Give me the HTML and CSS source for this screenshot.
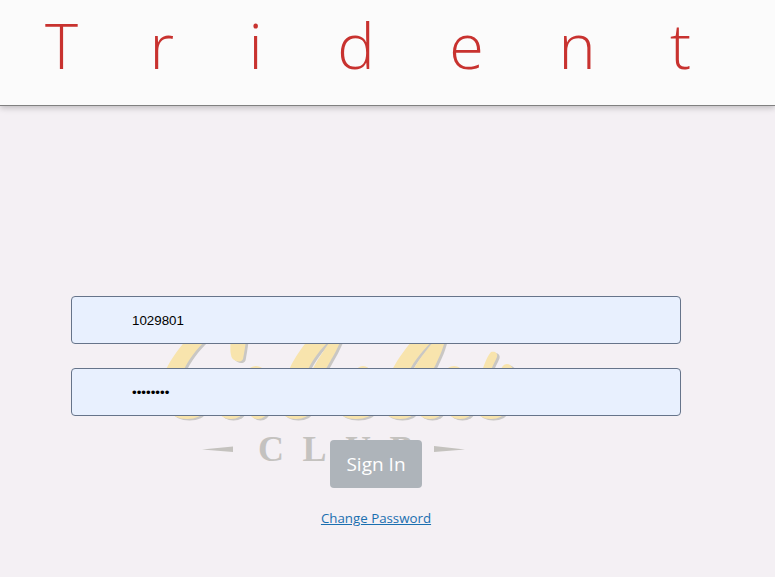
FILE: index.html
```html
<!DOCTYPE html>
<html lang="en">
<head>
<meta charset="utf-8">
<title>Trident</title>
<link rel="stylesheet" href="styles.css">
</head>
<body>
<header class="topbar">
  <h1 class="brand"><span class="brand-initial">T</span>rident</h1>
</header>
<main class="page">
  <svg class="logo" viewBox="160 335 360 135" width="360" height="135" aria-hidden="true">
    <defs>
      <g id="script">
        <path d="M186 340 L206 340 C196 350 188 360 183 372 L165 372 C170 360 178 350 186 340 Z"/>
        <path d="M231 340 L246 340 C245 348 244 354 243 359 C241 363 235 362 232 358 C230 354 230 346 231 340 Z"/>
        <ellipse cx="256" cy="372" rx="8" ry="6"/>
        <path d="M308 340 L330 340 C320 350 312 360 307 372 L288 372 C293 360 300 350 308 340 Z"/>
        <path d="M331 340 L341 340 C337 350 330 362 324 372 L311 372 C316 362 324 350 331 340 Z"/>
        <ellipse cx="363" cy="372" rx="7" ry="6"/>
        <path d="M413 340 L433 340 C424 350 414 360 409 372 L391 372 C396 362 404 350 413 340 Z"/>
        <path d="M435 340 L445 340 C443 350 437 362 432 372 L412 372 C417 362 426 350 435 340 Z"/>
        <ellipse cx="454" cy="372" rx="8" ry="6"/>
        <path d="M491 352 C495 351 498 353 497 357 C495 362 492 366 490 374 L481 374 C484 366 486 358 491 352 Z"/>
        <ellipse cx="507" cy="371" rx="6" ry="7"/>
        <ellipse cx="187" cy="411" rx="16" ry="8"/>
        <ellipse cx="231" cy="411" rx="12" ry="8"/>
        <ellipse cx="258" cy="411" rx="9" ry="8"/>
        <ellipse cx="296" cy="411" rx="14" ry="8"/>
        <ellipse cx="356" cy="411" rx="17" ry="8"/>
        <ellipse cx="400" cy="411" rx="15" ry="8"/>
        <ellipse cx="430" cy="411" rx="12" ry="8"/>
        <ellipse cx="460" cy="411" rx="12" ry="8"/>
        <ellipse cx="491" cy="411" rx="14" ry="8"/>
      </g>
    </defs>
    <use href="#script" class="logo-shadow" x="2.5" y="1.5"/>
    <use href="#script" class="logo-gold"/>
    <path class="logo-grey" d="M202 449.5 L233 446.5 L233 452 Z"/>
    <path class="logo-grey" d="M434 446 L465 449.5 L434 452 Z"/>
    <text class="logo-club" x="258" y="461">CLUB</text>
  </svg>
  <form class="login">
    <input class="field" type="text" value="1029801" aria-label="User ID">
    <input class="field" type="password" value="password" aria-label="Password">
    <button class="signin" type="button">Sign In</button>
    <a class="change" href="#">Change Password</a>
  </form>
</main>
</body>
</html>
```
FILE: styles.css
```css
* { box-sizing: border-box; }
html, body { margin: 0; height: 100%; }
body {
  background: #f4f0f4;
  font-family: "Open Sans", "Liberation Sans", sans-serif;
  overflow: hidden;
}
.topbar {
  height: 106px;
  background: #fbfbfb;
  border-bottom: 1px solid #808080;
  box-shadow: 0 2px 6px rgba(0, 0, 0, 0.22);
  padding-left: 45px;
}
.brand {
  margin: 0;
  font-family: "Open Sans", sans-serif;
  font-weight: 300;
  font-size: 63px;
  line-height: 90px;
  letter-spacing: 74.5px;
  color: #c8322f;
  white-space: nowrap;
}
.brand-initial { letter-spacing: 71.5px; }
.page { position: relative; }
.logo {
  position: absolute;
  left: 160px;
  top: 229px;
  z-index: -1;
}
.logo-gold { fill: #f8e4ad; }
.logo-shadow { fill: #c9c7c4; }
.logo-grey { fill: #c4c2be; }
.logo-club {
  font-family: "Liberation Serif", serif;
  font-weight: 700;
  font-size: 36px;
  letter-spacing: 18.5px;
  fill: #c4c2bf;
}
.login {
  width: 610px;
  margin-left: 71px;
  padding-top: 190px;
  display: flex;
  flex-direction: column;
  align-items: center;
}
.field {
  width: 100%;
  height: 48px;
  margin-bottom: 24px;
  padding: 0 0 0 60px;
  border: 1px solid #66748a;
  border-radius: 4px;
  background: #e8f0fe;
  color: #000;
  font-family: "Liberation Sans", Arial, sans-serif;
  font-size: 13.33px;
  outline: none;
}
.signin {
  width: 92px;
  height: 48px;
  border: 0;
  border-radius: 4px;
  background: #aeb4ba;
  color: #fff;
  font-family: "Open Sans", sans-serif;
  font-size: 19px;
  font-weight: 500;
  padding: 0;
}
.change {
  margin-top: 20px;
  font-size: 13.3px;
  line-height: 20px;
  color: #1a6fb0;
}
```
